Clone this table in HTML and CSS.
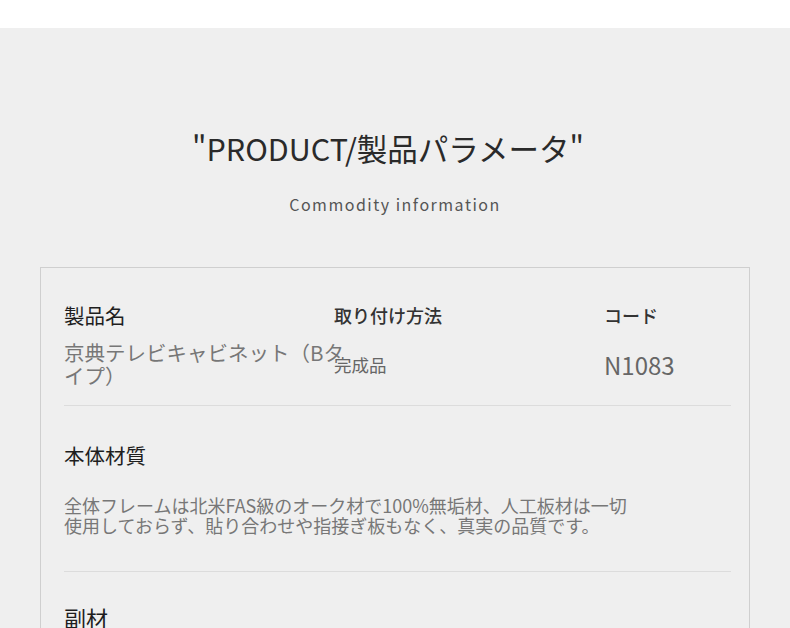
FILE: index.html
```html
<!DOCTYPE html>
<html lang="ja">
<head>
  <meta charset="UTF-8">
  <title>製品パラメータ</title>
  <link rel="stylesheet" href="styles.css">
</head>
<body>
  <div class="topbar"></div>

  <section class="params">
    <h1 class="title">"PRODUCT/製品パラメータ"</h1>
    <p class="subtitle">Commodity information</p>

    <div class="card">
      <div class="row spec-grid">
        <div class="label label-lg">製品名</div>
        <div class="label">取り付け方法</div>
        <div class="label">コード</div>
        <div class="value value-name">京典テレビキャビネット（Bタイプ）</div>
        <div class="value">完成品</div>
        <div class="value value-code">N1083</div>
      </div>

      <div class="row">
        <div class="label label-lg">本体材質</div>
        <p class="desc">全体フレームは北米FAS級のオーク材で100%無垢材、人工板材は一切<br>使用しておらず、貼り合わせや指接ぎ板もなく、真実の品質です。</p>
      </div>

      <div class="row">
        <div class="label label-lg label-xl">副材</div>
      </div>
    </div>
  </section>
</body>
</html>
```

FILE: styles.css
```css
* {
  margin: 0;
  padding: 0;
  box-sizing: border-box;
}

html, body {
  overflow: hidden;
}

body {
  font-family: "Noto Sans CJK JP", "Noto Sans", sans-serif;
  background: #efefef;
  color: #333;
}

.topbar {
  height: 28px;
  background: #fff;
}

.params {
  padding: 100px 40px 0 40px;
}

.title {
  font-size: 30.5px;
  font-weight: normal;
  line-height: 40px;
  text-align: center;
  color: #2a2a2a;
  padding-right: 14px;
}

.subtitle {
  margin-top: 25px;
  font-size: 16px;
  line-height: 22px;
  letter-spacing: 1.5px;
  text-align: center;
  color: #555;
}

.card {
  margin-top: 52px;
  border: 1px solid #cfcfcf;
  padding: 0 18px 200px 23px;
}

.row {
  border-bottom: 1px solid #dcdcdc;
  padding: 34px 0 36px 0;
}

.row:last-child {
  border-bottom: none;
  padding-top: 30px;
}

.spec-grid {
  display: grid;
  grid-template-columns: 270px 270px 1fr;
  grid-template-rows: 30px 46px;
  row-gap: 11px;
  align-items: center;
  padding-top: 32px;
  padding-bottom: 18px;
}

.label {
  font-size: 18px;
  font-weight: 500;
  line-height: 30px;
  color: #333;
}

.label-lg {
  font-size: 20.5px;
  font-weight: normal;
  color: #1e1e1e;
}

.label-xl {
  font-size: 22px;
}

.value {
  font-size: 17.5px;
  line-height: 23px;
  color: #666;
}

.value-name {
  width: 290px;
  font-size: 20.5px;
  color: #777;
}

.value-code {
  font-size: 24px;
}

.desc {
  margin-top: 25px;
  font-size: 18px;
  line-height: 20px;
  color: #777;
}
```
